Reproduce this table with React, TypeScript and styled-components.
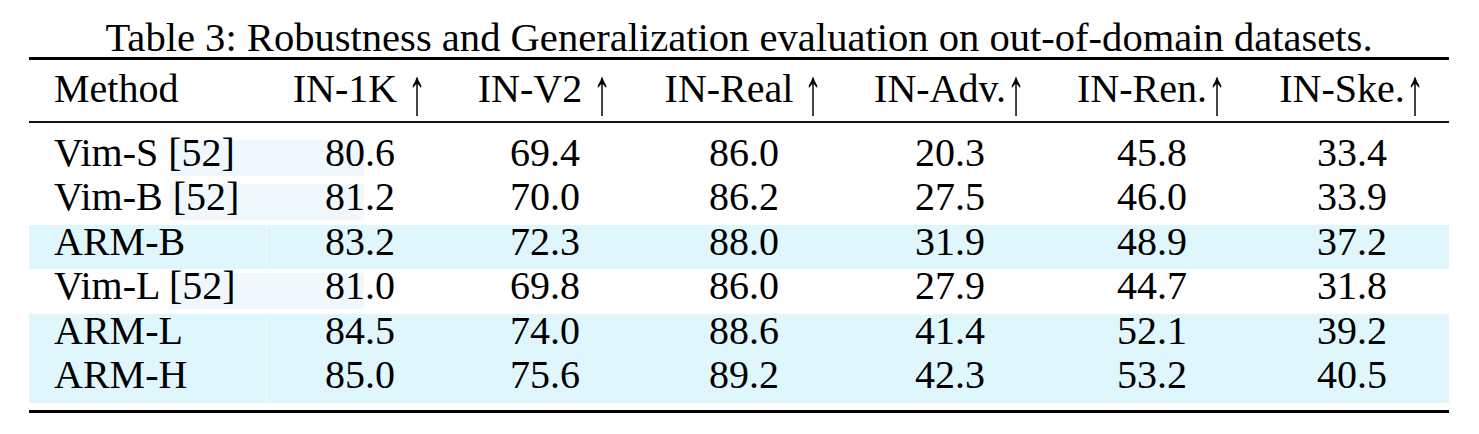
import React from 'react';
import styled, { createGlobalStyle } from 'styled-components';

const GlobalStyle = createGlobalStyle`
  body {
    margin: 0;
    background: #ffffff;
    color: #000000;
    font-family: "Liberation Serif", "Times New Roman", serif;
  }
`;

const columns = '238px 186px 184px 214px 198px 206px 194px';

const Page = styled.div`
  padding: 19px 0 0 29px;
  width: 1420px;
`;

const Caption = styled.div`
  font-size: 40.6px;
  line-height: 38px;
  text-align: center;
`;

const Table = styled.div`
  border-top: 3px solid #000;
  border-bottom: 3px solid #000;
  padding-bottom: 7px;
`;

const HeaderRow = styled.div`
  display: grid;
  grid-template-columns: ${columns};
  height: 63px;
  box-sizing: border-box;
  padding-top: 6px;
  border-bottom: 2px solid #111;
  margin-bottom: 12.7px;
  font-size: 40px;
  line-height: 45px;
`;

// the \uparrow in the paper is taller and thinner than the text font's arrow
const Arrow = styled.span`
  display: inline-block;
  transform: translateY(3px) scale(0.9, 1.65);
`;

const Row = styled.div<{ $highlight?: boolean }>`
  display: grid;
  grid-template-columns: ${columns};
  height: 44.5px;
  font-size: 40px;
  line-height: 34.5px;
  background: ${(p) => (p.$highlight ? '#e0f6fd' : 'transparent')};
`;

const Cell = styled.div<{ $left?: boolean; $seam?: boolean }>`
  padding: 0 ${(p) => (p.$left ? '0 0 25px' : '0')};
  text-align: ${(p) => (p.$left ? 'left' : 'center')};
  white-space: nowrap;
  box-shadow: ${(p) => (p.$seam ? 'inset -1px 0 0 rgba(255, 255, 255, 0.45)' : 'none')};
`;

// faint tint that the PDF renderer left behind the citations
const TintCell = styled(Cell)<{ $from: 'left' | 'right'; $tint?: boolean }>`
  background: ${(p) =>
    p.$tint
      ? `linear-gradient(#f0f8fe, #f0f8fe) no-repeat ${p.$from} 4px / 97px 36px`
      : 'none'};
`;

const headers = [
  { label: 'IN-1K', gap: true },
  { label: 'IN-V2', gap: true },
  { label: 'IN-Real', gap: true },
  { label: 'IN-Adv.', gap: false },
  { label: 'IN-Ren.', gap: false },
  { label: 'IN-Ske.', gap: false },
];

const rows = [
  { name: 'Vim-S [52]', values: ['80.6', '69.4', '86.0', '20.3', '45.8', '33.4'], ours: false },
  { name: 'Vim-B [52]', values: ['81.2', '70.0', '86.2', '27.5', '46.0', '33.9'], ours: false },
  { name: 'ARM-B', values: ['83.2', '72.3', '88.0', '31.9', '48.9', '37.2'], ours: true },
  { name: 'Vim-L [52]', values: ['81.0', '69.8', '86.0', '27.9', '44.7', '31.8'], ours: false },
  { name: 'ARM-L', values: ['84.5', '74.0', '88.6', '41.4', '52.1', '39.2'], ours: true },
  { name: 'ARM-H', values: ['85.0', '75.6', '89.2', '42.3', '53.2', '40.5'], ours: true },
];

function App() {
  return (
    <Page>
      <GlobalStyle />
      <Caption>Table 3: Robustness and Generalization evaluation on out-of-domain datasets.</Caption>
      <Table>
        <HeaderRow>
          <Cell $left>Method</Cell>
          {headers.map((h) => (
            <Cell key={h.label}>
              {h.label}
              {h.gap ? ' ' : ''}
              <Arrow>↑</Arrow>
            </Cell>
          ))}
        </HeaderRow>
        {rows.map((row) => (
          <Row key={row.name} $highlight={row.ours}>
            <TintCell $left $seam={row.ours} $from="right" $tint={!row.ours}>
              {row.name}
            </TintCell>
            {row.values.map((v, i) =>
              i === 0 ? (
                <TintCell key={i} $from="left" $tint={!row.ours}>
                  {v}
                </TintCell>
              ) : (
                <Cell key={i}>{v}</Cell>
              ),
            )}
          </Row>
        ))}
      </Table>
    </Page>
  );
}

export default App;
